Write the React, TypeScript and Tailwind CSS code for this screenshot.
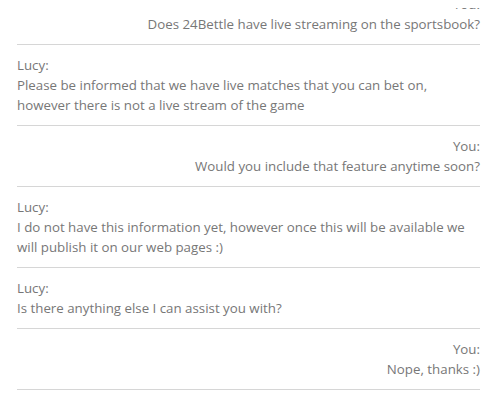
import React from "react";

type Msg = { who: string; text: string; right: boolean };

const messages: Msg[] = [
  { who: "You:", text: "Does 24Bettle have live streaming on the sportsbook?", right: true },
  {
    who: "Lucy:",
    text: "Please be informed that we have live matches that you can bet on, however there is not a live stream of the game",
    right: false,
  },
  { who: "You:", text: "Would you include that feature anytime soon?", right: true },
  {
    who: "Lucy:",
    text: "I do not have this information yet, however once this will be available we will publish it on our web pages :)",
    right: false,
  },
  { who: "Lucy:", text: "Is there anything else I can assist you with?", right: false },
  { who: "You:", text: "Nope, thanks :)", right: true },
];

export default function App() {
  return (
    <div className="h-[403px] w-[497px] bg-white pt-[8px]">
      <div className="h-[395px] overflow-hidden">
        <div
          className="-mt-[24px] px-[17px] text-[13.3px] leading-[20px] text-[#777777]"
          style={{ fontFamily: '"Open Sans", "Noto Sans", sans-serif' }}
        >
          {messages.map((m, i) => (
            <div
              key={i}
              className={`border-b border-[#d6d6d6] py-[10px] ${m.right ? "text-right" : "text-left"}`}
            >
              <div>{m.who}</div>
              <div>{m.text}</div>
            </div>
          ))}
        </div>
      </div>
    </div>
  );
}
